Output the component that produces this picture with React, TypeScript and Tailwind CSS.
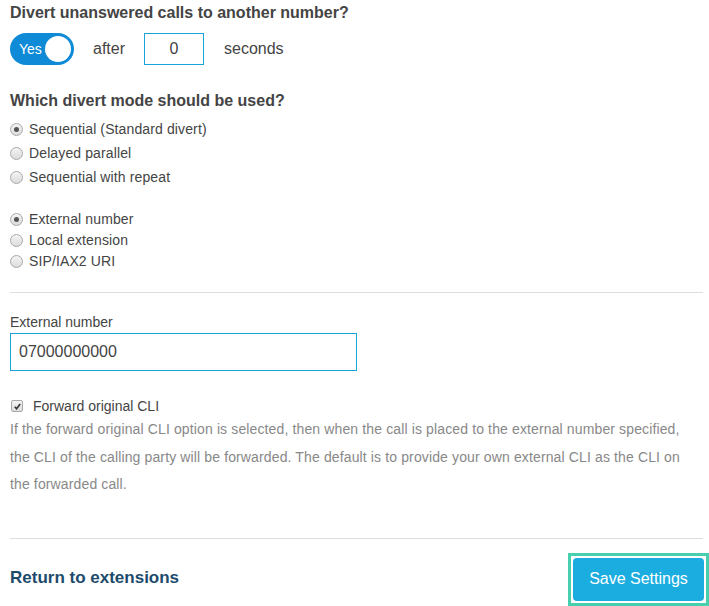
import React, { useState } from 'react';

const Radio: React.FC<{ checked?: boolean; label: string; h: string }> = ({ checked, label, h }) => (
  <div className={`flex items-center ${h}`}>
    <span className="w-[13px] h-[13px] rounded-full border border-[#a9a9a9] bg-gradient-to-b from-[#f4f4f4] to-[#dcdcdc] flex items-center justify-center">
      {checked && <span className="w-[5px] h-[5px] rounded-full bg-[#555]" />}
    </span>
    <span className="ml-[6px] text-[14px] tracking-[0.12px] text-[#444]">{label}</span>
  </div>
);

const App: React.FC = () => {
  const [divert, setDivert] = useState(true);
  const [mode, setMode] = useState(0);
  const [target, setTarget] = useState(0);

  const modes = ['Sequential (Standard divert)', 'Delayed parallel', 'Sequential with repeat'];
  const targets = ['External number', 'Local extension', 'SIP/IAX2 URI'];

  return (
    <div className="w-[709px] h-[606px] bg-white overflow-hidden font-['Liberation_Sans',Arial,sans-serif]">
      <div className="pl-[10px] w-[703px] pt-[3px]">
        <h2 className="text-[16px] leading-[20px] font-bold text-[#444]">Divert unanswered calls to another number?</h2>

        <div className="flex items-center mt-[10px] h-[32px]">
          <button
            onClick={() => setDivert(!divert)}
            className="w-[64px] h-[32px] rounded-full bg-[#0e8ad6] flex items-center pl-[9px] pr-[3px] justify-between"
          >
            <span className="text-white text-[14px]">Yes</span>
            <span className="w-[26px] h-[26px] rounded-full bg-white" />
          </button>
          <span className="ml-[19px] text-[16px] text-[#444]">after</span>
          <input
            defaultValue="0"
            className="ml-[19px] w-[60px] h-[32px] border border-[#1aa3d9] text-center text-[16px] text-[#444] outline-none"
          />
          <span className="ml-[20px] text-[16px] text-[#444]">seconds</span>
        </div>

        <h2 className="mt-[26px] text-[16px] leading-[20px] font-bold text-[#444]">Which divert mode should be used?</h2>

        <div className="mt-[6px]">
          {modes.map((m, i) => (
            <div key={m} onClick={() => setMode(i)}>
              <Radio checked={mode === i} label={m} h="h-[24px]" />
            </div>
          ))}
        </div>

        <div className="mt-[20px]">
          {targets.map((t, i) => (
            <div key={t} onClick={() => setTarget(i)}>
              <Radio checked={target === i} label={t} h="h-[21px]" />
            </div>
          ))}
        </div>

        <hr className="mt-[20px] border-t border-[#dedede]" />

        <label className="block mt-[19px] text-[14px] leading-[20px] text-[#444]">External number</label>
        <input
          defaultValue="07000000000"
          className="mt-[1px] w-[347px] h-[38px] border border-[#1aa3d9] px-[8px] text-[16px] text-[#444] outline-none"
        />

        <div className="flex items-center mt-[25px] h-[20px]">
          <span className="w-[12px] h-[12px] ml-[1px] rounded-[2px] border border-[#a9a9a9] bg-gradient-to-b from-[#f4f4f4] to-[#dcdcdc] flex items-center justify-center">
            <svg viewBox="0 0 10 10" className="w-[9px] h-[9px]">
              <path d="M2 5.2 L4 7.4 L8 2.2" fill="none" stroke="#333" strokeWidth="1.8" />
            </svg>
          </span>
          <span className="ml-[10px] text-[14px] text-[#444]">Forward original CLI</span>
        </div>

        <p className="text-[14px] leading-[27.5px] tracking-[0.13px] text-[#888] whitespace-nowrap">
          If the forward original CLI option is selected, then when the call is placed to the external number specified,
          <br />
          the CLI of the calling party will be forwarded. The default is to provide your own external CLI as the CLI on
          <br />
          the forwarded call.
        </p>

        <hr className="mt-[39px] border-t border-[#dedede]" />

        <div className="flex items-center justify-between mt-[14px]">
          <a href="#" className="text-[17px] font-bold text-[#1d4b6c] -mt-[3px]">Return to extensions</a>
          <div className="border-[3px] border-[#48cfae] p-[2px] -mr-[6px]">
            <button className="w-[131px] h-[43px] rounded-[4px] bg-[#1cade0] text-white text-[16px]">Save Settings</button>
          </div>
        </div>
      </div>
    </div>
  );
};

export default App;
